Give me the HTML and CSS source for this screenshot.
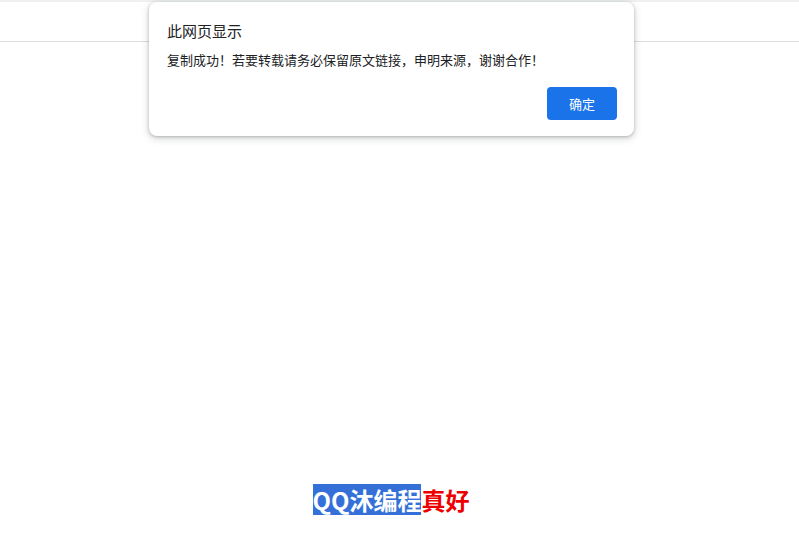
FILE: index.html
```html
<!DOCTYPE html>
<html lang="zh-CN">
<head>
<meta charset="utf-8">
<title>QQ沐编程</title>
<link rel="stylesheet" href="styles.css">
</head>
<body>
<div class="topstrip"></div>
<header class="topbar"></header>
<main class="content">
  <p class="slogan"><span class="sel">QQ沐编程</span><span class="red">真好</span></p>
</main>
<div class="dialog" role="dialog">
  <div class="dlg-title">此网页显示</div>
  <div class="dlg-msg">复制成功！若要转载请务必保留原文链接，申明来源，谢谢合作！</div>
  <div class="dlg-actions"><button class="dlg-btn">确定</button></div>
</div>
</body>
</html>
```
FILE: styles.css
```css
html, body {
  margin: 0;
  padding: 0;
  background: #ffffff;
  font-family: "Noto Sans CJK SC", "Noto Sans", sans-serif;
}
.topstrip {
  height: 2px;
  background: #eef0f1;
}
.topbar {
  height: 39px;
  border-bottom: 1px solid #dadce0;
}
.content {
  padding-top: 442px;
  padding-right: 17px;
  text-align: center;
}
.slogan {
  margin: 0;
  font-size: 24px;
  font-weight: bold;
  line-height: 31px;
}
.sel {
  display: inline-block;
  background: #3470d8;
  color: #ffffff;
  height: 31px;
}
.red {
  color: #ee0000;
}
.dialog {
  position: absolute;
  left: 149px;
  top: 2px;
  width: 450px;
  padding: 18px 17px 16px 18px;
  background: #ffffff;
  border-radius: 8px;
  box-shadow: 0 1px 3px rgba(60, 64, 67, 0.3), 0 2px 6px 2px rgba(60, 64, 67, 0.15);
}
.dlg-title {
  font-size: 15px;
  line-height: 21px;
  color: #202124;
}
.dlg-msg {
  margin-top: 10px;
  font-size: 13px;
  line-height: 18px;
  color: #202124;
}
.dlg-actions {
  margin-top: 18px;
  display: flex;
  justify-content: flex-end;
}
.dlg-btn {
  width: 70px;
  height: 33px;
  border: none;
  border-radius: 4px;
  background: #1a73e8;
  color: #ffffff;
  font-family: "Noto Sans CJK SC", sans-serif;
  font-size: 13px;
  padding: 0;
}
```
